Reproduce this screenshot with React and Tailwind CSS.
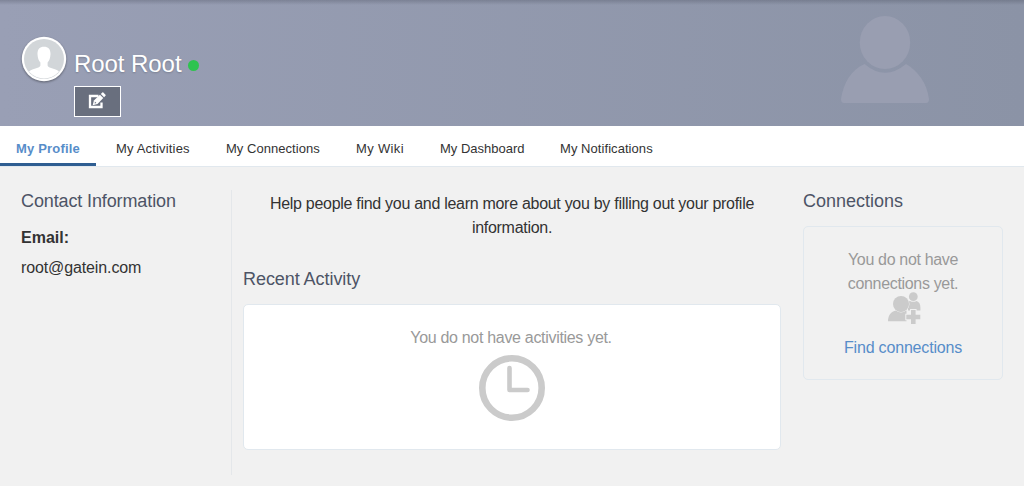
const tabs = [
  { label: "My Profile", active: true, width: "w-[96px]", tracking: "tracking-[0.18px]" },
  { label: "My Activities", width: "w-[106px]", tracking: "tracking-[0.17px]" },
  { label: "My Connections", width: "w-[126px]", tracking: "tracking-[0.04px]" },
  { label: "My Wiki", width: "w-[80px]", tracking: "tracking-[0.35px]" },
  { label: "My Dashboard", width: "w-[116px]", tracking: "tracking-normal" },
  { label: "My Notifications", width: "w-[125px]", tracking: "tracking-[0.06px]" },
];

function Avatar() {
  return (
    <svg viewBox="0 0 46 46" className="mt-[36px] h-[46px] w-[46px] shrink-0 drop-shadow-[0_1px_1px_rgba(0,0,0,0.4)]">
      <defs>
        <clipPath id="face">
          <circle cx="23" cy="23" r="19.6" />
        </clipPath>
      </defs>
      <circle cx="23" cy="23" r="22.2" fill="#fff" />
      <circle cx="23" cy="23" r="20" fill="#d2d6d9" />
      <path
        clipPath="url(#face)"
        fill="#fff"
        d="M23 10.800c-4.500 0-6.700 2.800-6.500 7.500.2 4 1.200 6.500 2.900 8.300v2.600c0 1.200-.8 1.700-2 2.200l-6 2.100C9 34.300 7 36.500 6 38.500V46h34v-7.500c-1-2-3-4.200-5.400-5l-6-2.100c-1.200-.5-2-1-2-2.200v-2.600c1.700-1.800 2.700-4.300 2.900-8.300.2-4.700-2-7.500-6.500-7.500z"
      />
    </svg>
  );
}

function EditIcon() {
  return (
    <svg viewBox="0 0 18 18" className="h-[18px] w-[18px]">
      <path d="M10.500 4H2v11h11.500V10.500" fill="none" stroke="#fff" strokeWidth="2.300" />
      <path d="M4.700 13.300l1.200-4.800 6-5.800 3.400 3.400L9.500 12z" fill="#fff" />
      <path d="M12.800 1.900l1.500-1.400q.5-.4 1 0l2.200 2.200q.4.500 0 1l-1.400 1.500z" fill="#fff" />
      <path d="M6.900 9.600l1.500 1.500-1.700.5z" fill="#696f7e" />
    </svg>
  );
}

function BannerPerson() {
  return (
    <svg viewBox="0 0 88 88" className="mt-[15px] mr-[95px] h-[88px] w-[88px]" fill="#999eb1">
      <ellipse cx="44" cy="27.500" rx="25.200" ry="26.600" />
      <path d="M23.500 49Q44 66.500 65 49C77 56 86 68 88 84q0 4-3 4H3q-3 0-3-4C2.500 68 10 55 23.500 49z" />
    </svg>
  );
}

function ConnectionsIcon() {
  return (
    <svg viewBox="0 0 33 33" className="h-[33px] w-[33px]" fill="#cbcbcb">
      <circle cx="25.300" cy="4.700" r="4.400" />
      <path d="M20 18.500V10.600q.8-1.500 2-1.700 3.300 1.800 6.600 0 3.800 1.300 3.800 6.600v3z" />
      <path d="M0 29.200c0-6 3-9.700 8-10.700h10.500v10.700z" />
      <circle cx="13" cy="12" r="8" stroke="#f1f1f1" strokeWidth="1" paintOrder="stroke" />
      <path d="M23 18h4.600v4.700h4.700v4.600h-4.700v4.700h-4.600v-4.700h-4.700v-4.600h4.700z" stroke="#f1f1f1" strokeWidth="2" paintOrder="stroke" />
    </svg>
  );
}

export default function App() {
  return (
    <div className="flex h-[486px] w-full flex-col overflow-hidden bg-[#f1f1f1] font-['Liberation_Sans',Arial,sans-serif] text-[16px] leading-6 text-[#333]">
      <header className="flex h-[126px] shrink-0 justify-between bg-linear-to-r from-[#999fb5] to-[#8b93a6]">
        <div className="flex w-full justify-between bg-linear-to-b from-[rgba(60,65,80,0.28)] to-transparent to-[5px]">
          <div className="flex pl-[21px]">
            <Avatar />
            <div className="ml-[7px]">
              <div className="mt-[49px] flex h-[30px] items-center">
                <h1 className="text-[24px] leading-[30px] tracking-[-0.06px] whitespace-nowrap text-white [text-shadow:0_1px_2px_rgba(0,0,0,0.2)]">Root Root</h1>
                <span className="mt-[2px] ml-[6px] h-[11px] w-[11px] rounded-full bg-[#2ec34f]" />
              </div>
              <button aria-label="Edit profile" className="mt-[7px] flex h-[31px] w-[47px] items-center justify-center border border-white bg-[#696f7e] pr-[2px] pb-px">
                <EditIcon />
              </button>
            </div>
          </div>
          <BannerPerson />
        </div>
      </header>

      <nav className="flex h-[41px] shrink-0 gap-1 border-b border-[#e1e8ee] bg-white text-[13px]">
        {tabs.map((tab) => (
          <a
            key={tab.label}
            className={`${tab.width} ${tab.tracking} flex h-[40px] shrink-0 border-b-[3px] pt-[11px] pl-4 whitespace-nowrap ${
              tab.active ? "border-[#2f5e92] font-bold text-[#578dc9]" : "border-transparent"
            }`}
          >
            {tab.label}
          </a>
        ))}
      </nav>

      <main className="flex pt-[23px] pr-[21px] pl-[21px]">
        <section className="h-[285px] w-[211px] shrink-0 border-r border-[#e4e7ea]">
          <h2 className="text-[18px] leading-[22px] tracking-[-0.12px] text-[#4d5466]">Contact Information</h2>
          <p className="mt-[14px] font-bold">Email:</p>
          <p className="mt-[6px] tracking-[-0.12px]">root@gatein.com</p>
        </section>

        <section className="ml-[11px] w-[538px] shrink-0">
          <p className="mt-[2px] px-[20px] text-center tracking-[-0.29px]">
            Help people find you and learn more about you by filling out your profile information.
          </p>
          <h2 className="mt-[28px] text-[18px] leading-[22px] tracking-[-0.06px] text-[#4d5466]">Recent Activity</h2>
          <div className="mt-[14px] flex h-[146px] flex-col items-center rounded-[5px] border border-[#e1e8ee] bg-white pt-[21px] text-[#999]">
            <p className="pr-[2px] tracking-[-0.31px]">You do not have activities yet.</p>
            <svg viewBox="0 0 66 66" className="mt-[5px] h-[66px] w-[66px]" fill="none" stroke="#cbcbcb">
              <circle cx="33" cy="33" r="29.700" strokeWidth="6.600" />
              <path d="M30.500 13v22H48.500" strokeWidth="4.600" strokeLinecap="round" strokeLinejoin="round" />
            </svg>
          </div>
        </section>

        <section className="ml-[22px] w-[200px] shrink-0">
          <h2 className="text-[18px] leading-[22px] text-[#4d5466]">Connections</h2>
          <div className="mt-[14px] flex h-[154px] flex-col items-center rounded-[5px] border border-[#e1e8ee] pt-[21px] text-center text-[#999]">
            <p className="w-[120px] tracking-[-0.33px]">You do not have connections yet.</p>
            <div className="-mt-[4px] ml-[2px]">
              <ConnectionsIcon />
            </div>
            <a className="mt-[11px] tracking-[-0.18px] text-[#578dc9]">Find connections</a>
          </div>
        </section>
      </main>
    </div>
  );
}
